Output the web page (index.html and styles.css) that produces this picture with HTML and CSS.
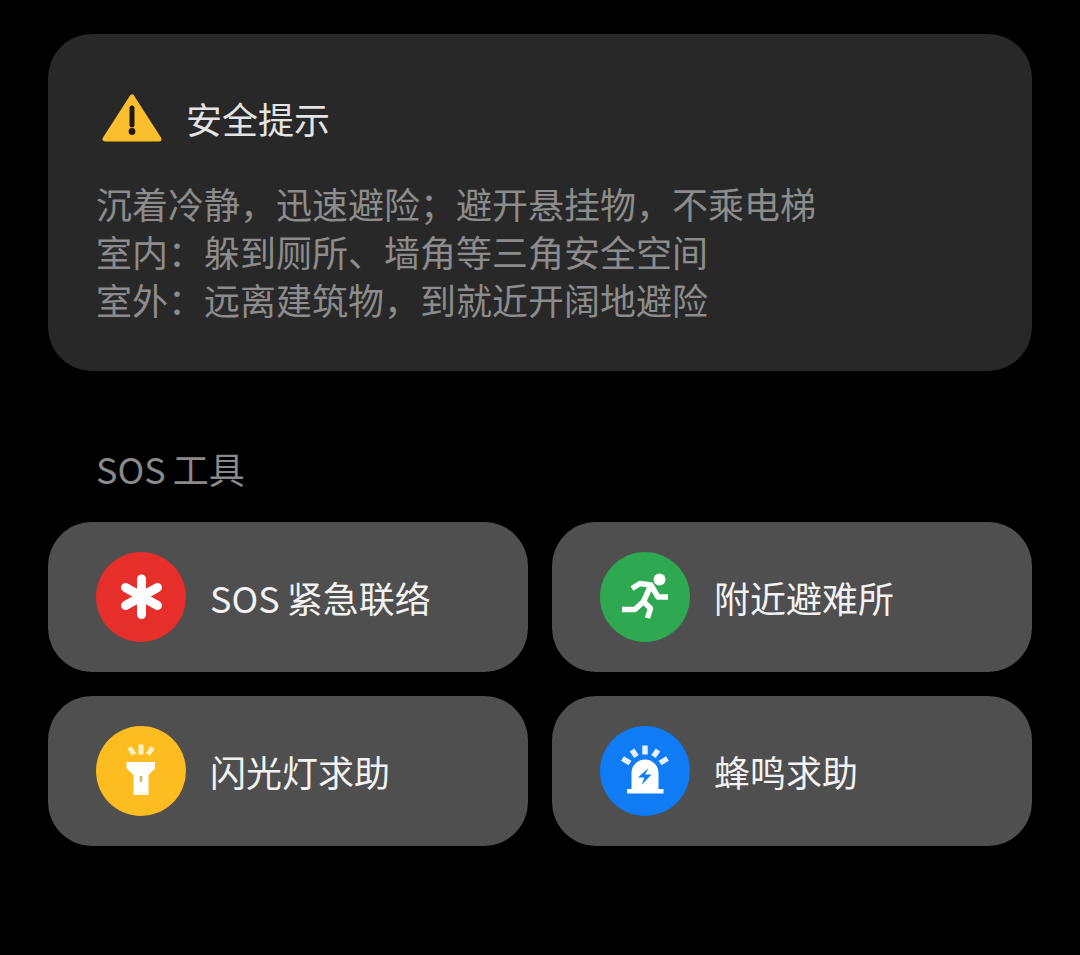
FILE: index.html
```html
<!DOCTYPE html>
<html lang="zh-CN">
<head>
  <meta charset="UTF-8">
  <meta name="viewport" content="width=device-width,initial-scale=1.0">
  <title>安全提示</title>
  <link rel="stylesheet" href="styles.css">
</head>
<body>
  <section class="tips">
    <div class="tips-head">
      <svg class="warn" width="60" height="48" viewBox="0 0 60 48">
        <path d="M30 3 L3 45 H57 Z" fill="#fbbf2d" stroke="#fbbf2d" stroke-width="5" stroke-linejoin="round"/>
        <path d="M30 14 V31" stroke="#1f1a10" stroke-width="5" stroke-linecap="round"/>
        <circle cx="30" cy="37.5" r="3.4" fill="#1f1a10"/>
      </svg>
      <h1>安全提示</h1>
    </div>
    <p>沉着冷静，迅速避险；避开悬挂物，不乘电梯<br>室内：躲到厕所、墙角等三角安全空间<br>室外：远离建筑物，到就近开阔地避险</p>
  </section>

  <h2 class="tools-title">SOS 工具</h2>

  <div class="tools">
    <button class="tool">
      <svg class="disc" width="90" height="90" viewBox="0 0 90 90">
        <circle cx="45" cy="45" r="45" fill="#e62e2a"/>
        <path d="M45.5 27 V62.5 M29.5 35.5 L61.5 53.5 M61.5 35.5 L29.5 53.5" stroke="#fff" stroke-width="9" stroke-linecap="round"/>
      </svg>
      <span>SOS 紧急联络</span>
    </button>
    <button class="tool">
      <svg class="disc" width="90" height="90" viewBox="0 0 90 90">
        <circle cx="45" cy="45" r="45" fill="#2ea851"/>
        <circle cx="59.5" cy="27.5" r="6" fill="#fff"/>
        <path d="M32 36.5 L40 31.5 L51 33 L58 45 H68 M51 33 L43.5 49.5 L35 57.5 H22 M43.5 49.5 L50.5 56.5 L47.5 66" fill="none" stroke="#fff" stroke-width="5.5" stroke-linejoin="round"/>
      </svg>
      <span>附近避难所</span>
    </button>
    <button class="tool">
      <svg class="disc" width="90" height="90" viewBox="0 0 90 90">
        <circle cx="45" cy="45" r="45" fill="#fdbc1f"/>
        <path d="M30.5 36 H59 V42.5 L52.5 49 V69 H37.5 V49 L30.5 42.5 Z" fill="#fff"/>
        <path d="M45 50 V56" stroke="#d9b35a" stroke-width="2.5"/>
        <path d="M45 18.5 V28.5 M33.5 21.5 L38 28.5 M56.5 21.5 L52 28.5" stroke="#fff2c6" stroke-width="5"/>
      </svg>
      <span>闪光灯求助</span>
    </button>
    <button class="tool">
      <svg class="disc" width="90" height="90" viewBox="0 0 90 90">
        <circle cx="45" cy="45" r="45" fill="#0f7bf5"/>
        <path d="M31.5 64 V47 A13.5 13.5 0 0 1 58.5 47 V64 Z" fill="#fff"/>
        <path d="M27 63 H63.5 V67.5 H27 Z" fill="#fff"/>
        <path d="M48.5 42 L38 51.5 H44.5 L41.5 59 L51.5 48.5 H45 Z" fill="#0f7bf5"/>
        <path d="M45 19.5 V28.5 M32 24 L36.5 30.5 M58 24 L53.5 30.5 M22.5 32.5 L30 37 M67.5 32.5 L60 37" stroke="#e4f0ff" stroke-width="5.5"/>
      </svg>
      <span>蜂鸣求助</span>
    </button>
  </div>
</body>
</html>
```

FILE: styles.css
```css
body {
  margin: 0;
  padding: 34px 48px 0;
  background: #000;
  font-family: "Noto Sans CJK SC", "Noto Sans", sans-serif;
}

.tips {
  height: 337px;
  box-sizing: border-box;
  padding: 60px 48px 0;
  background: #282828;
  border-radius: 44px;
}
.tips-head {
  display: flex;
  align-items: center;
  gap: 24px;
  margin-left: 6px;
  height: 48px;
}
.tips-head h1 {
  margin: 0;
  font-size: 36px;
  font-weight: 400;
  line-height: 48px;
  color: #e4e4e4;
}
.tips p {
  margin: 37px 0 0;
  font-size: 36px;
  line-height: 48px;
  color: #8c8c8c;
}

.tools-title {
  margin: 75px 0 31px 48px;
  font-size: 36px;
  font-weight: 400;
  line-height: 45px;
  word-spacing: -1px;
  color: #8a8a8a;
}

.tools {
  display: grid;
  grid-template-columns: 480px 480px;
  grid-auto-rows: 150px;
  gap: 24px;
}
.tool {
  display: flex;
  align-items: center;
  gap: 24px;
  padding: 0 0 0 48px;
  border: none;
  border-radius: 44px;
  background: #4f4f4f;
  font: inherit;
  font-size: 36px;
  word-spacing: -1px;
  color: #f2f2f2;
}
.disc {
  flex: none;
}
```
